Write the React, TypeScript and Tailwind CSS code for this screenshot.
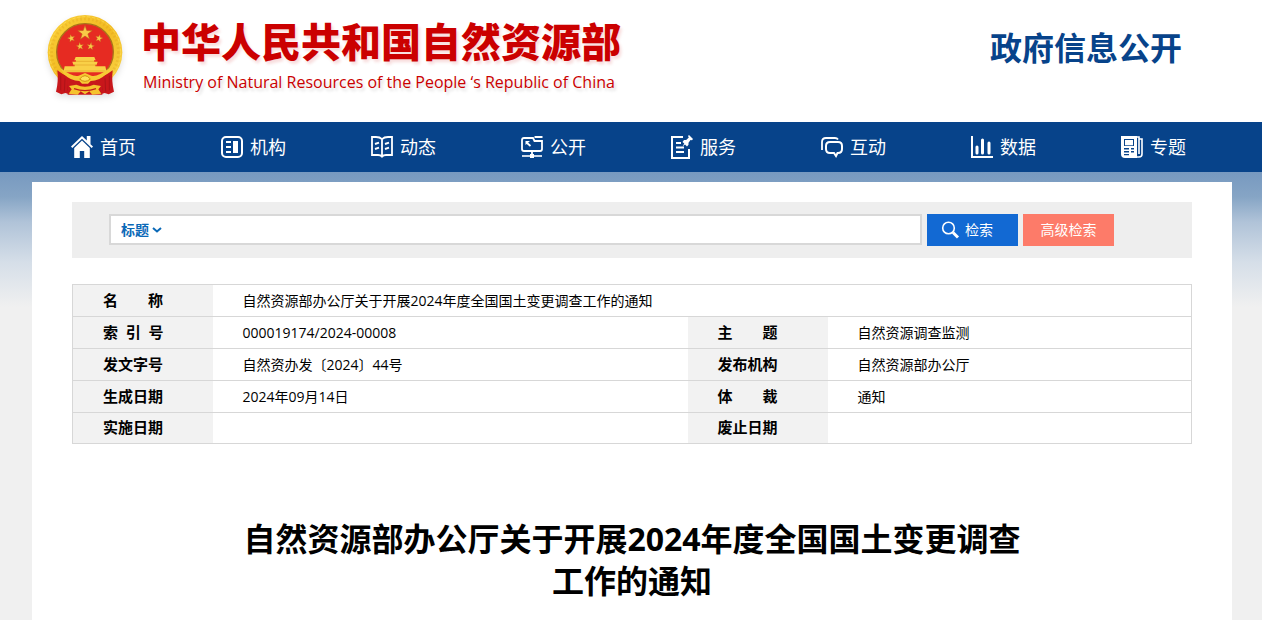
import { useState } from 'react';
import type { ReactNode } from 'react';

interface NavItem {
  label: string;
  icon: ReactNode;
}

const NAV_ITEMS: NavItem[] = [
  {
    label: '首页',
    icon: (
      <>
        <path fill="currentColor" d="M11 0 0 10.6l1.3 1.5L11 2.8l9.7 9.3 1.3-1.5-2.5-2.4V0h-3.7v4.6z" />
        <path fill="currentColor" d="M11 4.6 3.2 12v10h5.6v-7h4.4v7h5.6V12z" />
      </>
    ),
  },
  {
    label: '机构',
    icon: (
      <>
        <rect x="1" y="1" width="20" height="20" rx="4" strokeWidth="2" />
        <path strokeWidth="2" d="M5 6h5M5 11h5M5 16h5" />
        <path fill="currentColor" d="M12 5h5v12h-5z" />
      </>
    ),
  },
  {
    label: '动态',
    icon: (
      <>
        <path
          strokeWidth="1.8"
          d="M11 3.2C9.5 1.7 7.5 1 5 1H1v18h6c2 0 3 .4 4 1.6 1-1.200 2-1.600 4-1.600h6V1h-4c-2.500 0-4.500.7-6 2.200zM11 3v17"
        />
        <path strokeWidth="2" d="M4 8l4-1.400M4 13l4-1.400M14 8l4-1.400M14 13l4-1.400" />
      </>
    ),
  },
  {
    label: '公开',
    icon: (
      <>
        <path strokeWidth="1.8" d="M12 2H3Q1 2 1 4v9q0 2 2 2h16q2 0 2-2V5h-7.500z" />
        <path strokeWidth="2" d="M13.500 1H21.500" />
        <path strokeWidth="1.800" d="M5.500 6.500l4 3.500M11 15v4" />
        <path fill="currentColor" d="M4.500 5h4.500L4.500 9z" />
        <path strokeWidth="1.600" d="M1 20h20" />
        <path fill="currentColor" d="M9 18h4v4H9z" />
      </>
    ),
  },
  {
    label: '服务',
    icon: (
      <>
        <path strokeWidth="2" d="M12 1H1v21h17v-9" />
        <path strokeWidth="2" d="M5 7h5M5 11.500h8M5 16h8" />
        <path fill="currentColor" d="m18-1 4 4-1 1.200-1.500-.2-2 2.700v2L16 10.500l-2-2-2.500 2 1.800-3L11.500 6 13 4h2.200L17.800 1.600 17 0z" />
      </>
    ),
  },
  {
    label: '互动',
    icon: (
      <>
        <path strokeWidth="1.8" d="M1 14V6q0-4 4-4h9q2 0 3 1.500" />
        <path strokeWidth="2" d="M9 6h8q4 0 4 4v3q0 4-4 4h-.5L15 20l-2-3H9q-4 0-4-4v-3q0-4 4-4z" />
      </>
    ),
  },
  {
    label: '数据',
    icon: (
      <>
        <path strokeWidth="2" d="M1 0v21h21" />
        <path strokeWidth="3" strokeLinecap="round" d="M6 11v6M11.500 4v13M18 7v10" />
      </>
    ),
  },
  {
    label: '专题',
    icon: (
      <>
        <path fill="currentColor" fillRule="evenodd" d="M0 0h16v22H4q-4 0-4-4zM3 3v7h10V3zM3 12v1.400h5V12zM3 15v1.400h5V15zM3 18v1.200h5V18zM10 12v1.400h3V12zM10 15v1.400h3V15z" />
        <path fill="currentColor" d="M4 4h8v5.300H4z" />
        <path strokeWidth="1.6" d="M15 1h3v17M18 3h3v15q0 3-3 3h-3" />
      </>
    ),
  },
];

const STAR = 'M0-10 2.400-3.200 9.500-3.100 3.800 1.200 5.900 8.100 0 4-5.900 8.100-3.800 1.200-9.500-3.100-2.400-3.200z';

function Emblem() {
  return (
    <svg viewBox="0 0 240 255" className="h-[85px] w-20 shrink-0 drop-shadow-md" aria-hidden="true">
      <defs>
        <linearGradient id="gold" x1="0" y1="0" x2="1" y2="1">
          <stop offset="0" stopColor="#fbd23b" />
          <stop offset="0.5" stopColor="#f2bb22" />
          <stop offset="1" stopColor="#fad64a" />
        </linearGradient>
      </defs>
      <circle cx="120" cy="118" r="112" fill="url(#gold)" />
      <circle cx="120" cy="118" r="100" fill="none" stroke="#d99412" strokeWidth="8" strokeDasharray="5 7" opacity="0.25" />
      <circle cx="120" cy="118" r="107" fill="none" stroke="#ffe56b" strokeWidth="3" strokeDasharray="9 6" opacity="0.5" />
      <circle cx="120" cy="117" r="85" fill="#e62b22" stroke="#a9741a" strokeWidth="4" />
      <g fill="#f8c947" stroke="#c2571a" strokeWidth="0.8">
        <path d={STAR} transform="translate(120 60) scale(2.3)" />
        <path d={STAR} transform="translate(79 76) rotate(-15) scale(1.2)" />
        <path d={STAR} transform="translate(162 76) rotate(15) scale(1.2)" />
        <path d={STAR} transform="translate(105 100) rotate(-8) scale(1.2)" />
        <path d={STAR} transform="translate(137 100) rotate(8) scale(1.2)" />
      </g>
      <path fill="#f9d047" d="M92 132h56l4 10h-5v4h11l-3 9h-4v5h30l4 18H55l4-18h30v-5h-4l-3-9h11v-4h-5z" />
      <path stroke="#d9961c" strokeWidth="1.5" d="M90 145h60M84 156h72M59 174h122" />
      {/* ribbons and the gear at the foot of the wreath */}
      <path fill="#c8171b" d="M37 172q28 22 60 26l-14 20-10 26-12-4-12 4-16-8q8-30 4-64zM203 172q-28 22-60 26l14 20 10 26 12-4 12 4 16-8q-8-30-4-64z" />
      <path fill="none" stroke="#a01217" strokeWidth="2" d="M47 188v44M60 196l-2 40M193 188v44M180 196l2 40M72 202l-4 30M168 202l4 30" />
      <path fill="#c8171b" d="M68 196h104v49H68z" />
      <path fill="#f7c934" d="M47 166q38 28 54 22l19-8 19 8q16 6 54-22l-10 18q-20 20-46 20l-8 8h-18l-8-8q-26 0-46-20z" />
      <path fill="#ffdf5a" stroke="#d2920f" strokeWidth="3" d="M104 198q16-20 32 0-16 14-32 0z" />
      <path fill="#f5c32e" d="m72 219 22-4q26 12 52 0l22 4-8 10 9 13-27 3-9-10-13 9-13-9-9 10-27-3 9-13z" />
      <path fill="none" stroke="#c31d18" strokeWidth="4" d="M87 227q33 12 66 0" />
    </svg>
  );
}

function Header() {
  return (
    <header className="flex h-[122px] items-start justify-between pr-20 pl-[45px]">
      <div className="flex items-start gap-4 pt-[13px]">
        <Emblem />
        <div className="whitespace-nowrap text-[#cb0000]">
          <div className="text-[40px] leading-[58px] font-black [text-shadow:2px_3px_3px_#cb000022]">
            中华人民共和国自然资源部
          </div>
          <div className="pl-0.5 text-base leading-[22px] [text-shadow:2px_3px_3px_#00000022]">
            Ministry of Natural Resources of the People ‘s Republic of China
          </div>
        </div>
      </div>
      <div className="pt-6 text-[32px] leading-[48px] font-bold whitespace-nowrap text-[#07438a]">政府信息公开</div>
    </header>
  );
}

function MainNav() {
  return (
    <nav className="bg-[#07438a] pr-[30px] pl-8">
      <ul className="grid grid-cols-8">
        {NAV_ITEMS.map((item) => (
          <li key={item.label}>
            <a href="#" className="flex h-[50px] items-center gap-[7px] pl-[39px] text-lg text-white">
              <svg viewBox="0 0 22 22" className="size-[22px] overflow-visible" fill="none" stroke="currentColor" strokeWidth="0" aria-hidden="true">
                {item.icon}
              </svg>
              {item.label}
            </a>
          </li>
        ))}
      </ul>
    </nav>
  );
}

function SearchBar() {
  const [field, setField] = useState('title');
  const [keyword, setKeyword] = useState('');

  return (
    <form
      className="flex h-14 items-start gap-[5px] bg-[#eeeeee] pt-3 pr-[78px] pl-[37px]"
      onSubmit={(e) => e.preventDefault()}
    >
      <div className="flex h-[31px] flex-1 items-center border-2 border-[#d8d8d8] bg-white pl-2.5">
        <div className="relative flex items-center">
          <select
            aria-label="检索范围"
            className="w-[41px] cursor-pointer appearance-none bg-transparent text-sm font-bold text-[#0b69b7] outline-none"
            value={field}
            onChange={(e) => setField(e.target.value)}
          >
            <option value="title">标题</option>
            <option value="content">正文</option>
          </select>
          <svg viewBox="0 0 10 6" className="pointer-events-none absolute right-0 h-1.5 w-2.5 text-[#0b69b7]" aria-hidden="true">
            <path d="m1 1 4 3.500L9 1" fill="none" stroke="currentColor" strokeWidth="2" />
          </svg>
        </div>
        <input
          type="text"
          aria-label="检索词"
          className="h-full min-w-0 flex-1 px-2 text-sm outline-none"
          value={keyword}
          onChange={(e) => setKeyword(e.target.value)}
        />
      </div>
      <button type="submit" className="flex h-8 w-[91px] items-center gap-1 bg-[#1269d3] pl-[14px] text-sm text-white">
        <svg viewBox="0 0 20 20" className="size-5" fill="none" stroke="currentColor" aria-hidden="true">
          <circle cx="7.500" cy="8" r="5.800" strokeWidth="1.600" />
          <path d="m12 12.500 5 5" strokeWidth="3" />
        </svg>
        检索
      </button>
      <button type="button" className="h-8 w-[91px] bg-[#fd7b69] text-sm text-white">
        高级检索
      </button>
    </form>
  );
}

const META_ROWS = [
  ['索\u00a0\u00a0引\u00a0\u00a0号', '000019174/2024-00008', '主\u3000\u3000题', '自然资源调查监测'],
  ['发文字号', '自然资办发〔2024〕44号', '发布机构', '自然资源部办公厅'],
  ['生成日期', '2024年09月14日', '体\u3000\u3000裁', '通知'],
  ['实施日期', '', '废止日期', ''],
];

const LABEL_CELL = 'bg-[#f2f2f2] pl-[30px] text-left text-[15px] font-bold';
const VALUE_CELL = 'pl-[30px]';

function MetaTable() {
  return (
    <table className="mt-[26px] w-full table-fixed border-collapse border border-[#d7d7d7] text-sm text-black">
      <colgroup>
        <col className="w-[140px]" />
        <col />
        <col className="w-[140px]" />
        <col className="w-[364px]" />
      </colgroup>
      <tbody>
        <tr className="h-8 border-b border-[#d7d7d7]">
          <th scope="row" className={LABEL_CELL}>
            名{'\u3000\u3000'}称
          </th>
          <td colSpan={3} className={VALUE_CELL}>
            自然资源部办公厅关于开展2024年度全国国土变更调查工作的通知
          </td>
        </tr>
        {META_ROWS.map(([leftLabel, leftValue, rightLabel, rightValue]) => (
          <tr key={leftLabel} className="h-8 border-b border-[#d7d7d7] last:h-[31px]">
            <th scope="row" className={LABEL_CELL}>
              {leftLabel}
            </th>
            <td className={VALUE_CELL}>{leftValue}</td>
            <th scope="row" className={LABEL_CELL}>
              {rightLabel}
            </th>
            <td className={VALUE_CELL}>{rightValue}</td>
          </tr>
        ))}
      </tbody>
    </table>
  );
}

export default function App() {
  return (
    <div className="flex min-h-screen flex-col bg-white font-['Open_Sans','Noto_Sans_CJK_SC',sans-serif]">
      <Header />
      <MainNav />
      <div className="flex flex-1 flex-col bg-[#f0f0f0] bg-[linear-gradient(#7799c0_0px,#86a5c5_25px,#b0c3d8_50px,#d5dee8_90px,#f0f0f0_135px)] pt-2.5 pr-[30px] pl-8">
        <main className="flex-1 bg-white px-10 pt-5">
          <SearchBar />
          <MetaTable />
          <h1 className="mx-auto mt-[74px] max-w-[800px] text-center text-[32px] leading-[42px] font-bold text-black">
            自然资源部办公厅关于开展2024年度全国国土变更调查工作的通知
          </h1>
        </main>
      </div>
    </div>
  );
}
